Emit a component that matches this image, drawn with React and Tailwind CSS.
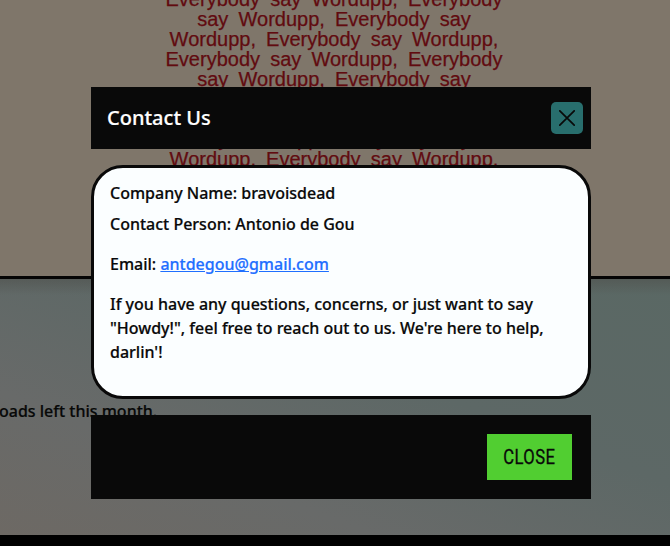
const verses = [
  "Everybody say Wordupp, Everybody",
  "say Wordupp, Everybody say",
  "Wordupp, Everybody say Wordupp,",
  "Everybody say Wordupp, Everybody",
  "say Wordupp, Everybody say",
  "Wordupp, Everybody say Wordupp,",
  "Everybody say Wordupp, Everybody",
  "say Wordupp, Everybody say",
  "Wordupp, Everybody say Wordupp,",
];

function Page() {
  return (
    <div className="flex h-full flex-col">
      <section className="h-[279px] shrink-0 overflow-hidden border-b-3 border-[#050505] bg-[#7f766a]">
        <div className="-mt-[11px] w-[668px] text-center font-['Liberation_Sans',Arial,sans-serif] text-[20px] leading-5 [word-spacing:4.6px] text-[#610b10] [-webkit-text-stroke:0.25px]">
          {verses.map((line, i) => (
            <p key={i} className="whitespace-nowrap">{line}</p>
          ))}
        </div>
      </section>
      <section className="h-64 shrink-0 bg-[linear-gradient(to_bottom,rgba(80,82,78,0.6),rgba(80,82,78,0)_16px),linear-gradient(to_top_right,#6d6964_0%,#686a69_28%,#5d6866_60%,#5a6864_100%)] pt-[120px]">
        <p className="-ml-px text-base font-medium whitespace-nowrap text-[#070807] [-webkit-text-stroke:0.2px]">oads left this month.</p>
      </section>
      <footer className="grow bg-black" />
    </div>
  );
}

function ContactDialog() {
  return (
    <div role="dialog" className="absolute top-[87px] left-[91px] flex w-[500px] flex-col gap-4 text-[#090909] [-webkit-text-stroke:0.2px]">
      <header className="flex h-[62px] items-center justify-between bg-[#090909] pr-2 pl-4">
        <h2 className="text-xl font-medium text-white">Contact Us</h2>
        <button aria-label="Close" className="flex size-8 items-center justify-center rounded-[5px] bg-[#286e6d]">
          <svg viewBox="0 0 16 16" className="size-4" fill="none" stroke="currentColor" strokeWidth="1.7" strokeLinecap="round">
            <path d="M.8.8l14.4 14.4M15.2.8L.8 15.2" />
          </svg>
        </button>
      </header>
      <div className="h-[234px] rounded-[32px] border-3 border-[#090909] bg-[#fbfeff] px-4 pt-[13px] text-base font-medium">
        <p className="mb-[7px]">Company Name: bravoisdead</p>
        <p className="mb-4">Contact Person: Antonio de Gou</p>
        <p className="mb-4">
          Email: <a className="text-[#1f6fff] underline">antdegou@gmail.com</a>
        </p>
        <p>If you have any questions, concerns, or just want to say "Howdy!", feel free to reach out to us. We're here to help, darlin'!</p>
      </div>
      <footer className="flex h-[84px] items-center justify-end bg-[#090909] pr-[19px]">
        <button className="flex h-[46px] w-[85px] items-center justify-center bg-[#51ce31] font-[Roboto,sans-serif] text-xl">
          <span className="scale-x-[0.83] tracking-[0.5px] [-webkit-text-stroke:0.3px]">CLOSE</span>
        </button>
      </footer>
    </div>
  );
}

export default function App() {
  return (
    <main className="relative h-[546px] w-[670px] overflow-hidden font-['Noto_Sans',sans-serif]">
      <Page />
      <ContactDialog />
    </main>
  );
}
